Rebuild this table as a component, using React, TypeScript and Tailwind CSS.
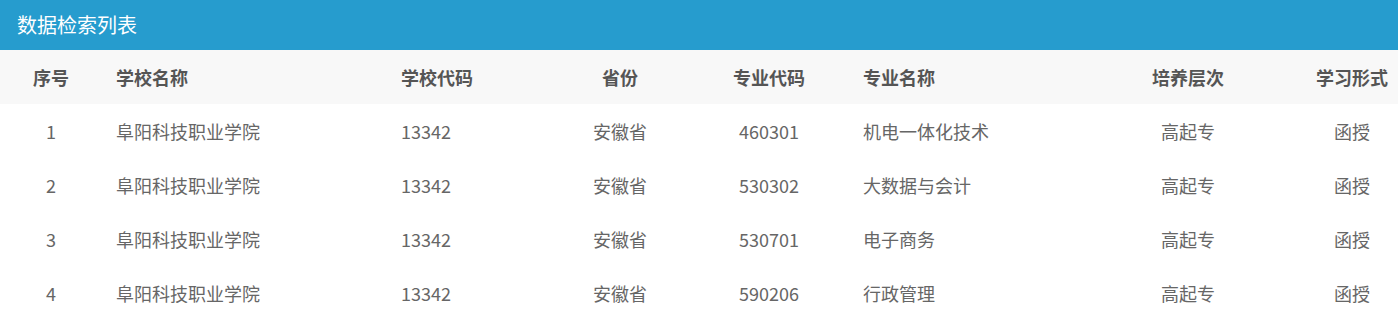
import React from 'react'

interface Row {
  id: number
  school: string
  code: string
  province: string
  majorCode: string
  major: string
  level: string
  form: string
}

const rows: Row[] = [
  { id: 1, school: '阜阳科技职业学院', code: '13342', province: '安徽省', majorCode: '460301', major: '机电一体化技术', level: '高起专', form: '函授' },
  { id: 2, school: '阜阳科技职业学院', code: '13342', province: '安徽省', majorCode: '530302', major: '大数据与会计', level: '高起专', form: '函授' },
  { id: 3, school: '阜阳科技职业学院', code: '13342', province: '安徽省', majorCode: '530701', major: '电子商务', level: '高起专', form: '函授' },
  { id: 4, school: '阜阳科技职业学院', code: '13342', province: '安徽省', majorCode: '590206', major: '行政管理', level: '高起专', form: '函授' },
]

const grid = 'grid grid-cols-[102px_285px_164px_138px_160px_221px_236px_92px] items-center'

const App: React.FC = () => {
  return (
    <div
      className="w-[1398px] bg-white"
      style={{ fontFamily: '"Microsoft YaHei", "Noto Sans CJK SC", "Liberation Sans", sans-serif' }}
    >
      <div className="h-[50px] bg-[#269cce] flex items-center pl-[17px] text-white text-[20px]">
        数据检索列表
      </div>

      <div className={`${grid} h-[54px] bg-[#f8f8f8] text-[18px] font-bold text-[#555]`}>
        <div className="text-center">序号</div>
        <div className="pl-[14px]">学校名称</div>
        <div className="pl-[14px]">学校代码</div>
        <div className="text-center">省份</div>
        <div className="text-center">专业代码</div>
        <div className="pl-[14px]">专业名称</div>
        <div className="text-center">培养层次</div>
        <div className="text-center">学习形式</div>
      </div>

      {rows.map((r) => (
        <div key={r.id} className={`${grid} h-[54px] text-[18px] text-[#666]`}>
          <div className="text-center">{r.id}</div>
          <div className="pl-[14px]">{r.school}</div>
          <div className="pl-[14px]">{r.code}</div>
          <div className="text-center">{r.province}</div>
          <div className="text-center">{r.majorCode}</div>
          <div className="pl-[14px]">{r.major}</div>
          <div className="text-center">{r.level}</div>
          <div className="text-center">{r.form}</div>
        </div>
      ))}
    </div>
  )
}

export default App
